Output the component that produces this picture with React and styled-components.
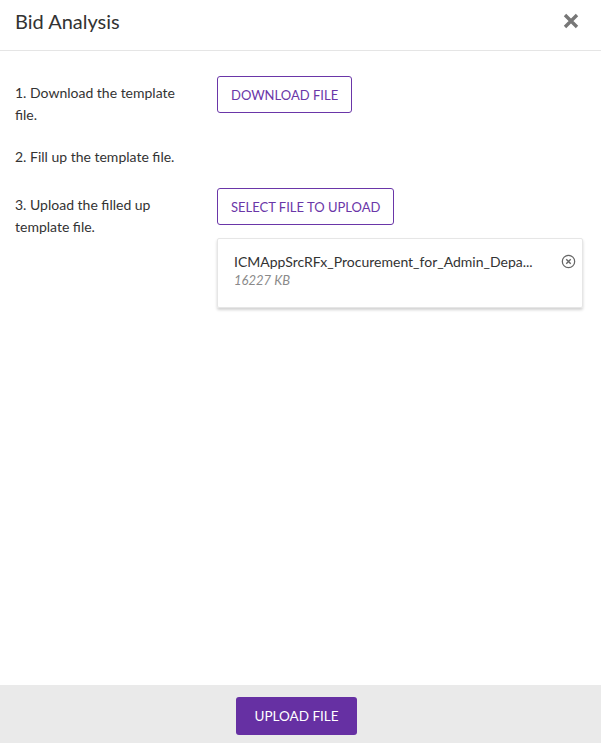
import React from "react";
import styled, { createGlobalStyle } from "styled-components";

const GlobalStyle = createGlobalStyle`
  html, body {
    margin: 0;
    padding: 0;
    background: #fff;
  }
  body {
    font-family: Lato, "Noto Sans", "Liberation Sans", sans-serif;
    color: #333;
  }
`;

const Dialog = styled.div`
  width: 100%;
  min-height: 100vh;
  display: flex;
  flex-direction: column;
  background: #fff;
`;

const Header = styled.div`
  height: 51px;
  box-sizing: border-box;
  display: flex;
  align-items: center;
  justify-content: space-between;
  padding: 0 22px 8px 15px;
  border-bottom: 1px solid #e5e5e5;
`;

const Title = styled.h2`
  margin: 0;
  font-size: 20px;
  font-weight: 400;
  color: #333;
`;

const Close = styled.button`
  border: none;
  background: none;
  padding: 0;
  display: flex;
  cursor: pointer;
`;

const Body = styled.div`
  flex: 1;
  display: flex;
  flex-direction: column;
  gap: 20px;
  padding: 25px 18px 0 15px;
`;

const Step = styled.div`
  display: flex;
  align-items: flex-start;
`;

const StepText = styled.div`
  width: 202px;
  flex-shrink: 0;
  box-sizing: border-box;
  padding: ${(p) => (p.$withAction ? "6px 40px 0 0" : "0")};
  font-size: 14px;
  line-height: 22px;
  color: #333;
`;

const Action = styled.div`
  flex: 1;
  display: flex;
  flex-direction: column;
  align-items: flex-start;
  gap: 13px;
`;

const OutlineButton = styled.button`
  height: 37px;
  padding: 0 13px;
  border: 1px solid #6a36a8;
  border-radius: 3px;
  background: #fff;
  color: #6a36a8;
  font-family: inherit;
  font-size: 13px;
  text-transform: uppercase;
  cursor: pointer;
`;

const FileCard = styled.div`
  align-self: stretch;
  height: 70px;
  box-sizing: border-box;
  display: flex;
  justify-content: space-between;
  align-items: flex-start;
  padding: 13px 6px 0 16px;
  border: 1px solid #e6e6e6;
  border-radius: 2px;
  box-shadow: 0 2px 3px rgba(0, 0, 0, 0.18);
`;

const FileInfo = styled.div`
  display: flex;
  flex-direction: column;
`;

const FileName = styled.div`
  font-size: 14px;
  line-height: 19px;
  color: #333;
  white-space: nowrap;
`;

const FileSize = styled.div`
  font-size: 13px;
  line-height: 18px;
  font-style: italic;
  color: #8a8a8a;
`;

const Remove = styled.button`
  border: none;
  background: none;
  padding: 2px 0 0;
  display: flex;
  cursor: pointer;
`;

const Footer = styled.div`
  background: #eaeaea;
  display: flex;
  justify-content: center;
  padding: 12px 8px 8px 0;
`;

const PrimaryButton = styled.button`
  height: 38px;
  padding: 0 18px;
  border: none;
  border-radius: 3px;
  background: #6630a3;
  color: #fff;
  font-family: inherit;
  font-size: 13.5px;
  text-transform: uppercase;
  cursor: pointer;
`;

const CloseIcon = () => (
  <svg width="16" height="16" viewBox="0 0 16 16">
    <path
      d="M2 2 L14 14 M14 2 L2 14"
      stroke="#777"
      strokeWidth="3.4"
      strokeLinecap="butt"
    />
  </svg>
);

const RemoveIcon = () => (
  <svg width="15" height="15" viewBox="0 0 16 16">
    <circle cx="8" cy="8" r="6.6" fill="none" stroke="#666" strokeWidth="1.3" />
    <path d="M5.6 5.6 L10.4 10.4 M10.4 5.6 L5.6 10.4" stroke="#666" strokeWidth="1.5" />
  </svg>
);

export default function App() {
  return (
    <Dialog>
      <GlobalStyle />
      <Header>
        <Title>Bid Analysis</Title>
        <Close aria-label="Close">
          <CloseIcon />
        </Close>
      </Header>
      <Body>
        <Step>
          <StepText $withAction>1. Download the template file.</StepText>
          <Action>
            <OutlineButton>Download File</OutlineButton>
          </Action>
        </Step>
        <Step>
          <StepText>2. Fill up the template file.</StepText>
        </Step>
        <Step>
          <StepText $withAction>3. Upload the filled up template file.</StepText>
          <Action>
            <OutlineButton>Select File to Upload</OutlineButton>
            <FileCard>
              <FileInfo>
                <FileName>ICMAppSrcRFx_Procurement_for_Admin_Depa...</FileName>
                <FileSize>16227 KB</FileSize>
              </FileInfo>
              <Remove aria-label="Remove file">
                <RemoveIcon />
              </Remove>
            </FileCard>
          </Action>
        </Step>
      </Body>
      <Footer>
        <PrimaryButton>Upload File</PrimaryButton>
      </Footer>
    </Dialog>
  );
}
